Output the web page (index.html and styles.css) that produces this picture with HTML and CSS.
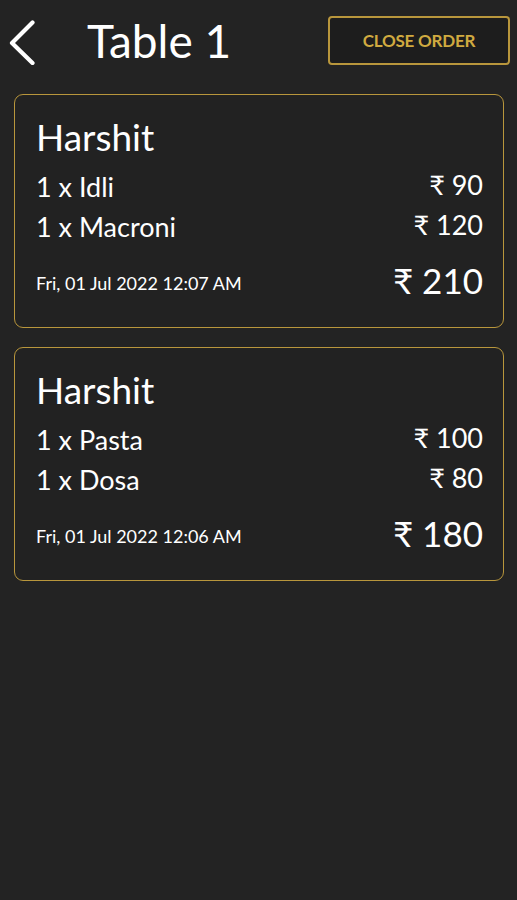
FILE: index.html
```html
<!DOCTYPE html>
<html lang="en">
<head>
<meta charset="utf-8">
<title>Table 1</title>
<link rel="stylesheet" href="styles.css">
</head>
<body>
<header class="topbar">
  <svg class="back" width="40" height="49" viewBox="0 0 40 49" aria-hidden="true">
    <path d="M32.5 6.5 L12 27 L32.5 47" fill="none" stroke="#ffffff" stroke-width="4.2" stroke-linecap="round" stroke-linejoin="round"/>
  </svg>
  <h1 class="title">Table 1</h1>
  <button class="close-btn">CLOSE ORDER</button>
</header>
<main class="orders">
  <section class="card">
    <div class="name">Harshit</div>
    <ul class="items">
      <li class="item"><span>1 x Idli</span><span class="price">₹ 90</span></li>
      <li class="item"><span>1 x Macroni</span><span class="price">₹ 120</span></li>
    </ul>
    <div class="foot"><span class="date">Fri, 01 Jul 2022 12:07 AM</span><span class="total">₹ 210</span></div>
  </section>
  <section class="card">
    <div class="name">Harshit</div>
    <ul class="items">
      <li class="item"><span>1 x Pasta</span><span class="price">₹ 100</span></li>
      <li class="item"><span>1 x Dosa</span><span class="price">₹ 80</span></li>
    </ul>
    <div class="foot"><span class="date">Fri, 01 Jul 2022 12:06 AM</span><span class="total">₹ 180</span></div>
  </section>
</main>
</body>
</html>
```
FILE: styles.css
```css
html, body {
  margin: 0;
  padding: 0;
  background: #232323;
  color: #ffffff;
  font-family: Lato, "Open Sans", "Liberation Sans", sans-serif;
}
body {
  min-height: 900px;
}
.topbar {
  display: flex;
  align-items: center;
  height: 49px;
  padding: 16px 7px 0 0;
}
.back {
  flex: none;
  display: block;
}
.title {
  margin: 0 0 0 47px;
  font-size: 46px;
  line-height: 49px;
  font-weight: 400;
  flex: 1;
}
.close-btn {
  flex: none;
  width: 182px;
  height: 49px;
  background: #1d1d1d;
  border: 2px solid #b8963c;
  border-radius: 4px;
  color: #d0aa40;
  font-family: Lato, "Open Sans", sans-serif;
  font-weight: 700;
  font-size: 17px;
  letter-spacing: -0.2px;
  padding: 0;
}
.orders {
  display: flex;
  flex-direction: column;
  gap: 19px;
  padding: 29px 13px 0 14px;
}
.card {
  border: 1.5px solid #b8963c;
  border-radius: 9px;
  background: #222222;
  padding: 22px 20px 25px 21px;
}
.name {
  font-size: 37px;
  line-height: 40px;
}
.items {
  list-style: none;
  margin: 10px 0 0;
  padding: 0;
}
.item {
  display: flex;
  justify-content: space-between;
  align-items: flex-start;
  font-size: 27px;
  line-height: 40px;
}
.price {
  line-height: 36px;
}
.foot {
  display: flex;
  justify-content: space-between;
  align-items: center;
  margin-top: 11px;
  height: 44px;
}
.date {
  font-size: 18px;
  line-height: 20px;
  margin-top: 5px;
}
.total {
  font-size: 35px;
  line-height: 44px;
}
```
